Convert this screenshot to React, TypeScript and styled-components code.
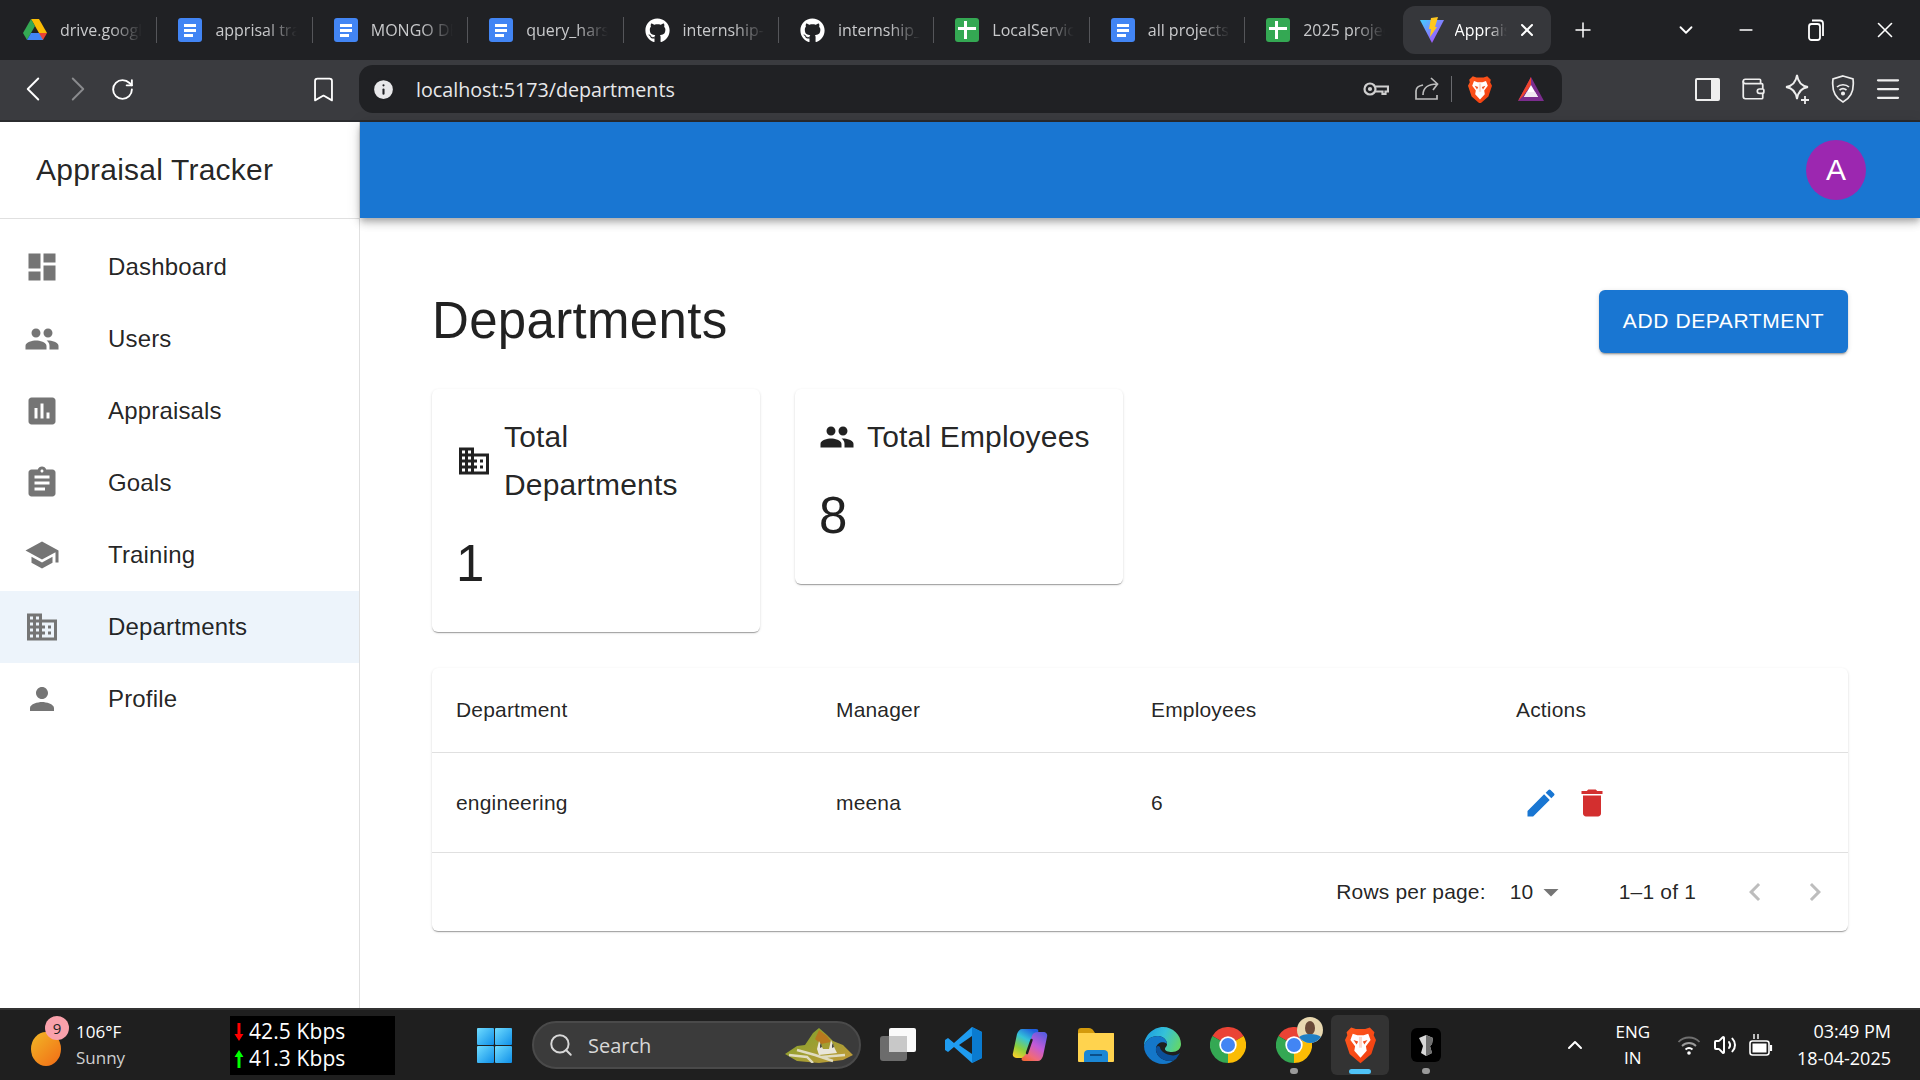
import React from 'react'
import styled, { createGlobalStyle } from 'styled-components'
import { FaGithub } from 'react-icons/fa'
import {
  MdArrowDropDown,
  MdAssessment,
  MdAssignment,
  MdBusiness,
  MdChevronLeft,
  MdChevronRight,
  MdDashboard,
  MdDelete,
  MdEdit,
  MdPeople,
  MdPerson,
  MdSchool
} from 'react-icons/md'
import {
  Bookmark,
  ChevronDown,
  ChevronLeft,
  ChevronRight,
  ChevronUp,
  Info,
  Menu,
  Minus,
  Plus,
  RotateCw,
  Search,
  Volume2,
  Wallet,
  X
} from 'lucide-react'

const GlobalStyle = createGlobalStyle`
  html, body {
    margin: 0;
    padding: 0;
    background: #fff;
    overflow: hidden;
  }

  * {
    box-sizing: border-box;
  }
`

const DocIcon = () => (
  <svg width="24" height="24" viewBox="0 0 24 24">
    <rect x="0" y="0" width="24" height="24" rx="3" fill="#4285f4" />
    <rect x="6" y="6" width="12" height="3" fill="#fff" />
    <rect x="6" y="11" width="12" height="3" fill="#fff" />
    <rect x="6" y="16" width="9" height="3" fill="#fff" />
  </svg>
)

const SheetIcon = () => (
  <svg width="24" height="24" viewBox="0 0 24 24">
    <rect x="0" y="0" width="24" height="24" rx="3" fill="#34a853" />
    <rect x="3" y="9" width="18" height="3" fill="#fff" />
    <rect x="9" y="3" width="3" height="18" fill="#fff" />
  </svg>
)

const DriveIcon = () => (
  <svg width="24" height="22" viewBox="0 0 24 22">
    <polygon points="8,0 16,0 24,14 16,14" fill="#fbbc04" />
    <polygon points="8,0 12,7 4,21 0,14" fill="#34a853" />
    <polygon points="16,14 24,14 20,21 12,21" fill="#ea4335" />
    <polygon points="8,14 16,14 20,21 4,21" fill="#4285f4" />
  </svg>
)

const ViteIcon = () => (
  <svg width="26" height="26" viewBox="0 0 26 26">
    <defs>
      <linearGradient id="vite" x1="0" y1="0" x2="1" y2="1">
        <stop offset="0" stopColor="#41d1ff" />
        <stop offset="1" stopColor="#bd34fe" />
      </linearGradient>
    </defs>
    <polygon points="1,3 25,3 13,26" fill="url(#vite)" />
    <polygon points="12,1 19,0 16,10 18,10 11,20 12,12 10,12" fill="#ffc81f" />
  </svg>
)

const BraveIcon = ({ size = 26 }: { size?: number }) => (
  <svg width={size} height={size * 1.2} viewBox="0 0 20 24">
    <defs>
      <linearGradient id="brave" x1="0" y1="0" x2="1" y2="1">
        <stop offset="0" stopColor="#ff5a1f" />
        <stop offset="1" stopColor="#f03c0e" />
      </linearGradient>
    </defs>
    <polygon points="4,1 7,2 13,2 16,1 19,4 18.500,6 20,9 17,18 10,24 3,18 0,9 1.500,6 1,4" fill="url(#brave)" />
    <polygon points="5,5 8,6 12,6 15,5 16.500,9 13.500,13 14,16 10,20.500 6,16 6.500,13 3.500,9" fill="#fff" />
    <polygon points="5.500,9 8.500,10 7.500,12" fill="#f1501f" />
    <polygon points="14.500,9 11.500,10 12.500,12" fill="#f1501f" />
    <polygon points="9,7 11,7 11,14 9,14" fill="#ffd9cc" />
  </svg>
)

const AuroraIcon = () => (
  <svg width="26" height="24" viewBox="0 0 26 24">
    <polygon points="13,0 26,24 0,24" fill="#7b2d8e" />
    <polygon points="13,0 13,8 5,19 0,24" fill="#f0452c" />
    <polygon points="13,8 20,20 6,20" fill="#fff" />
    <polygon points="9,15 17,15 20,20 6,20" fill="#f0e8f2" />
  </svg>
)

const KeyIcon = () => (
  <svg width="26" height="16" viewBox="0 0 26 16" fill="none" stroke="#cfcfcf" strokeWidth="2.2">
    <circle cx="7" cy="8" r="5.500" />
    <circle cx="7" cy="8" r="1" />
    <path d="M12.500 5.500H25V10.500H22.500V13H19.500V10.500H12.500" />
  </svg>
)

const ShareIcon = () => (
  <svg width="25" height="25" viewBox="0 0 25 25" fill="none" stroke="#bdbdbd" strokeWidth="1.700">
    <path d="M9 9C5 10 2 11 2 15V23H23V19" />
    <path d="M9 19C9 12 14 8 23 8M17 2L23.500 8L19 14" />
  </svg>
)

const VpnShieldIcon = () => (
  <svg width="24" height="28" viewBox="0 0 24 28" fill="none" stroke="#eee" strokeWidth="1.700">
    <path d="M12 1L22 4C23 12 22 22 12 27C2 22 1 12 2 4Z" />
    <path d="M6 12C9 9 15 9 18 12M8.500 15C10.500 13.500 13.500 13.500 15.500 15" />
    <circle cx="12" cy="18.500" r="1.200" fill="#eee" />
  </svg>
)

const StarPlusIcon = () => (
  <svg width="28" height="32" viewBox="0 0 28 32" fill="none" stroke="#eee" strokeWidth="1.800">
    <path d="M13 2C14 9 17 13 24 14C17 15 14 19 13 26C12 19 9 15 2 14C9 13 12 9 13 2Z" />
    <path d="M21 23V31M17 27H25" />
  </svg>
)

const RestoreIcon = () => (
  <svg width="16" height="22" viewBox="0 0 16 22" fill="none" stroke="#fff" strokeWidth="1.800">
    <rect x="1" y="5" width="11" height="16" rx="2.500" />
    <path d="M4 1.500H12C14 1.500 15 2.500 15 4.500V17" />
  </svg>
)

const WifiIcon = () => (
  <svg width="24" height="22" viewBox="0 0 24 22" fill="none" strokeWidth="1.800">
    <path d="M1.500 8C7 2 17 2 22.500 8" stroke="#6f6f6f" />
    <path d="M5 12C9 8 15 8 19 12" stroke="#9a9a9a" />
    <path d="M8.500 15.500C10.500 13.800 13.500 13.800 15.500 15.500" stroke="#fff" />
    <circle cx="12" cy="19" r="1.800" fill="#fff" />
  </svg>
)

const BatteryIcon = () => (
  <svg width="24" height="24" viewBox="0 0 24 24" fill="none" stroke="#fff" strokeWidth="1.600">
    <rect x="1" y="8" width="19" height="14" rx="2.500" />
    <rect x="3.500" y="10.500" width="14" height="9" fill="#fff" stroke="none" />
    <path d="M22 12V18" strokeWidth="2.200" />
    <path d="M5 1V6M9 1V6" strokeWidth="1.400" />
  </svg>
)

const WindowsIcon = () => (
  <svg width="35" height="35" viewBox="0 0 35 35">
    <defs>
      <linearGradient id="win" x1="0" y1="0" x2="1" y2="1">
        <stop offset="0" stopColor="#6fdcff" />
        <stop offset="1" stopColor="#0f8fe8" />
      </linearGradient>
    </defs>
    <rect x="0" y="0" width="17" height="17" rx="1" fill="url(#win)" />
    <rect x="18" y="0" width="17" height="17" rx="1" fill="url(#win)" />
    <rect x="0" y="18" width="17" height="17" rx="1" fill="url(#win)" />
    <rect x="18" y="18" width="17" height="17" rx="1" fill="url(#win)" />
  </svg>
)

const TaskViewIcon = () => (
  <svg width="36" height="34" viewBox="0 0 36 34">
    <rect x="0" y="8" width="27" height="25" rx="3" fill="#6c6c6c" />
    <rect x="9" y="0" width="27" height="24" rx="2" fill="#fafafa" />
    <rect x="9" y="8" width="18" height="16" fill="#c8c8c8" />
  </svg>
)

const VsCodeIcon = () => (
  <svg width="38" height="38" viewBox="0 0 38 38">
    <polygon points="27,1 37,6 37,32 27,37 9,21 3,26 0,24 0,14 3,12 9,17" fill="#1f9cf0" />
    <polygon points="27,10 27,28 14,19" fill="#1f1f1f" />
    <polygon points="27,1 37,6 37,32 27,37 27,28 27,10" fill="#0a7bd0" />
  </svg>
)

const CopilotIcon = () => (
  <svg width="36" height="34" viewBox="0 0 36 34">
    <defs>
      <linearGradient id="cop1" x1="0.700" y1="0" x2="0.200" y2="1">
        <stop offset="0" stopColor="#1f5fe0" />
        <stop offset="0.350" stopColor="#34c3d8" />
        <stop offset="0.700" stopColor="#8ccf3c" />
        <stop offset="1" stopColor="#f4cf2c" />
      </linearGradient>
      <linearGradient id="cop2" x1="0.800" y1="0" x2="0.200" y2="1">
        <stop offset="0" stopColor="#5a5de0" />
        <stop offset="0.450" stopColor="#c35ad8" />
        <stop offset="0.800" stopColor="#f06a7a" />
        <stop offset="1" stopColor="#f2683c" />
      </linearGradient>
    </defs>
    <path d="M10 1h14c3 0 3 3 1 4-3 2-4 5-5 8l-4 13c-1 3-3 4-6 4H5c-3 0-5-2-4-5L5 6c1-3 3-5 5-5z" fill="url(#cop1)" />
    <path d="M26 33H12c-3 0-3-3-1-4 3-2 4-5 5-8l4-13c1-3 3-4 6-4h5c3 0 5 2 4 5l-4 19c-1 3-3 5-5 5z" fill="url(#cop2)" />
    <path d="M19.500 12L15 25" stroke="#1f1f1f" strokeWidth="2.400" strokeLinecap="round" />
  </svg>
)

const FolderIcon = () => (
  <svg width="36" height="34" viewBox="0 0 36 34">
    <path d="M0 3c0-2 1-3 3-3h8c2 0 3 1 4 2l2 3h19v8H0z" fill="#d39a0c" />
    <rect x="0" y="5" width="36" height="29" rx="1" fill="#ffd34e" />
    <path d="M6 34V26c0-3 2-4 4-4h16c2 0 4 1 4 4v8z" fill="#1b87d5" />
    <rect x="12" y="26" width="12" height="2" fill="#0b4f8a" />
  </svg>
)

const EdgeIcon = () => (
  <svg width="37" height="37" viewBox="0 0 37 37">
    <defs>
      <linearGradient id="edge1" x1="0" y1="0.300" x2="1" y2="0.600">
        <stop offset="0" stopColor="#1b9de2" />
        <stop offset="0.500" stopColor="#35c1d8" />
        <stop offset="1" stopColor="#62d66c" />
      </linearGradient>
    </defs>
    <path d="M19 0C29 0 37 8 37 17c0 5-4 8-9 8-4 0-7-1-7-3 0-2 2-2 2-5 0-4-4-8-9-8C7 9 2 13 0 19 0 9 9 0 19 0z" fill="url(#edge1)" />
    <path d="M0 19C2 13 7 9 14 9c5 0 9 4 9 8-3-3-10-2-11 4-1 6 5 13 14 13 2 0 4-1 6-2-4 3-8 5-13 5C9 37 0 29 0 19z" fill="#1477c9" />
    <path d="M12 21c-1 6 5 13 14 13 2 0 4-1 6-2l4-6c-3 2-6 3-10 2-6-1-10-5-10-8-2-2-3-1-4 1z" fill="#0b4f99" />
  </svg>
)

const ChromeIcon = () => (
  <svg width="36" height="36" viewBox="0 0 36 36">
    <path d="M18 18L2.400 9A18 18 0 0 1 33.600 9Z" fill="#ea4335" />
    <path d="M18 18L2.400 9A18 18 0 0 0 18 36Z" fill="#34a853" />
    <path d="M18 18L33.600 9A18 18 0 0 1 18 36Z" fill="#fbbc04" />
    <circle cx="18" cy="18" r="8.700" fill="#fff" />
    <circle cx="18" cy="18" r="7" fill="#4285f4" />
  </svg>
)

const ProfilePic = () => (
  <svg width="26" height="26" viewBox="0 0 26 26">
    <circle cx="13" cy="13" r="13" fill="#e8d8b0" />
    <ellipse cx="13" cy="11" rx="5" ry="7" fill="#6a4a38" />
    <path d="M2 20c4-4 18-4 22 0-3 4-7 6-11 6s-8-2-11-6z" fill="#1f7fc4" />
  </svg>
)

const MountainIcon = () => (
  <svg width="72" height="36" viewBox="0 0 72 36">
    <defs>
      <linearGradient id="hill" x1="0" y1="0" x2="1" y2="1">
        <stop offset="0" stopColor="#7ca32a" />
        <stop offset="1" stopColor="#c49a3a" />
      </linearGradient>
    </defs>
    <polygon points="2,27 14,19 22,18 30,6 36,1 44,8 50,14 60,18 70,28 60,33 36,36 14,34" fill="url(#hill)" />
    <polygon points="36,3 44,9 48,15 38,17 32,12" fill="#b8791f" />
    <polygon points="34,22 36,14 40,22 46,22 48,13 52,22 54,26 36,28" fill="#e9e6da" />
    <polygon points="37,18 38,16 39,20 37,21" fill="#4a4a40" />
    <polygon points="49,18 50,16 51,20 49,21" fill="#4a4a40" />
    <path d="M6 28L24 30L30 36M14 23L32 28L50 34M38 30L62 28" fill="none" stroke="#e0dcc0" strokeWidth="2.400" />
  </svg>
)

const BlackAppIcon = () => (
  <svg width="30" height="34" viewBox="0 0 30 34">
    <rect x="0" y="0" width="30" height="34" rx="6" fill="#000" />
    <polygon points="8,10 15,7 22,10 21,16 19,18 21,25 15,28 10,25 12,18" fill="#d8d8d8" />
    <polygon points="15,7 22,10 21,16 19,18 21,25 15,28" fill="#6f6f6f" />
  </svg>
)

const NetArrow = ({ color, down }: { color: string; down?: boolean }) => (
  <svg width="10" height="20" viewBox="0 0 10 20">
    <polygon
      points={down ? '3.500,1 6.500,1 6.500,12 9.500,12 5,19 0.500,12 3.500,12' : '3.500,19 6.500,19 6.500,8 9.500,8 5,1 0.500,8 3.500,8'}
      fill={color}
    />
  </svg>
)

const Chrome = styled.header`
  background: #202124;
  color: #fff;
  font-family: 'Open Sans', 'Noto Sans', sans-serif;
`

const TabStrip = styled.div`
  display: flex;
  align-items: center;
  height: 60px;
  padding-left: 2px;
`

const Tab = styled.div<{ $last?: boolean }>`
  display: flex;
  align-items: center;
  gap: 13px;
  width: 155.4px;
  height: 48px;
  padding-left: 21px;
  border-right: 1px solid;
  border-image: ${p =>
    p.$last
      ? 'linear-gradient(transparent, transparent) 1'
      : 'linear-gradient(transparent 12px, #55565a 12px, #55565a 36px, transparent 36px) 1'};
`

const TabLabel = styled.span`
  width: 82px;
  overflow: hidden;
  white-space: nowrap;
  font-size: 16px;
  color: #c9cacc;
  mask-image: linear-gradient(to right, #000 62%, transparent 100%);
`

const ActiveTab = styled.div`
  display: flex;
  align-items: center;
  gap: 10px;
  width: 148px;
  height: 48px;
  margin-left: 2px;
  padding: 0 12px 0 16px;
  background: #36373b;
  border-radius: 12px;
`

const ActiveLabel = styled(TabLabel)`
  width: 52px;
  color: #fff;
`

const NewTab = styled.div`
  display: flex;
  margin-left: 20px;
`

const WindowControls = styled.div`
  display: flex;
  align-items: center;
  margin-left: auto;
`

const WindowSlot = styled.span<{ $narrow?: boolean }>`
  display: flex;
  justify-content: center;
  width: ${p => (p.$narrow ? 51 : 69.5)}px;
`

const Toolbar = styled.div`
  display: flex;
  align-items: center;
  height: 62px;
  padding-bottom: 2px;
  background: #3a3b3f;
  border-bottom: 2px solid #2b2c2f;
`

const NavButtons = styled.div`
  display: flex;
  align-items: center;
  width: 359px;
  padding-left: 11px;
`

const NavSlot = styled.span`
  display: flex;
  justify-content: center;
  width: 44.5px;
`

const BookmarkSlot = styled.span`
  display: flex;
  justify-content: center;
  width: 44px;
  margin-left: 157px;
`

const AddressBar = styled.div`
  display: flex;
  align-items: center;
  width: 1203px;
  height: 48px;
  padding: 0 8px 0 12px;
  border-radius: 14px;
  background: #202124;
`

const Url = styled.span`
  margin-left: 20px;
  font-size: 19.7px;
  color: #e8e8ea;
`

const AddressTools = styled.div`
  display: flex;
  align-items: center;
  margin-left: auto;
`

const AddressSlot = styled.span<{ $width: number }>`
  display: flex;
  justify-content: center;
  width: ${p => p.$width}px;
`

const ToolDivider = styled.span`
  width: 1px;
  height: 26px;
  background: #6a6b6f;
`

const BrowserTools = styled.div`
  display: flex;
  align-items: center;
  margin-left: auto;
  padding-right: 10px;
`

const BrowserSlot = styled.span`
  display: flex;
  justify-content: center;
  width: 45px;
`

const SolidPanel = styled.span`
  display: block;
  width: 25px;
  height: 23px;
  border: 2px solid #eee;
  border-right-width: 9px;
  border-radius: 2px;
`

const Page = styled.div`
  display: flex;
  height: 886px;
  font-family: 'Liberation Sans', Arial, sans-serif;
  letter-spacing: 0.17px;
  color: rgba(0, 0, 0, 0.87);
  background: #fff;
`

const Sidebar = styled.aside`
  flex: 0 0 360px;
  border-right: 1px solid #e0e0e0;
`

const Brand = styled.div`
  display: flex;
  align-items: center;
  height: 97px;
  padding-left: 36px;
  font-size: 30px;
  font-weight: 400;
  letter-spacing: 0.22px;
  border-bottom: 1px solid #e0e0e0;
`

const NavList = styled.nav`
  padding-top: 12px;
`

const NavItem = styled.div<{ $active?: boolean }>`
  display: flex;
  align-items: center;
  height: 72px;
  padding-left: 24px;
  font-size: 24px;
  background: ${p => (p.$active ? '#edf4fb' : 'transparent')};
`

const NavIcon = styled.span`
  display: flex;
  width: 84px;
  color: #757575;
`

const Content = styled.div`
  flex: 1;
  display: flex;
  flex-direction: column;
  min-width: 0;
`

const AppBar = styled.div`
  display: flex;
  align-items: center;
  justify-content: flex-end;
  height: 96px;
  padding-right: 54px;
  background: #1976d2;
  box-shadow: 0 3px 6px -1px rgba(0, 0, 0, 0.2), 0 6px 8px 0 rgba(0, 0, 0, 0.14), 0 1px 14px 0 rgba(0, 0, 0, 0.12);
`

const Avatar = styled.div`
  display: flex;
  align-items: center;
  justify-content: center;
  width: 60px;
  height: 60px;
  border-radius: 50%;
  background: #9c27b0;
  color: #fff;
  font-size: 30px;
`

const Main = styled.main`
  padding: 72px;
`

const HeadingRow = styled.div`
  display: flex;
  align-items: center;
  justify-content: space-between;
  margin-bottom: 36px;
`

const Heading = styled.h1`
  margin: 0;
  padding-bottom: 2px;
  font-size: 51px;
  font-weight: 400;
  line-height: 61px;
  letter-spacing: 0.33px;
`

const PrimaryButton = styled.button`
  width: 249px;
  height: 63px;
  padding: 0 0 2px;
  border: none;
  border-radius: 6px;
  background: #1976d2;
  color: #fff;
  font-family: inherit;
  font-size: 21px;
  font-weight: 400;
  letter-spacing: 0.6px;
  text-transform: uppercase;
  box-shadow: 0 3px 1px -2px rgba(0, 0, 0, 0.2), 0 2px 2px 0 rgba(0, 0, 0, 0.14), 0 1px 5px 0 rgba(0, 0, 0, 0.12);
`

const Cards = styled.div`
  display: flex;
  align-items: flex-start;
  gap: 35.5px;
  margin-bottom: 36px;
`

const Card = styled.section`
  width: 327.5px;
  padding: 24px 24px 36px;
  border-radius: 6px;
  background: #fff;
  box-shadow: 0 2px 1px -1px rgba(0, 0, 0, 0.2), 0 1px 1px 0 rgba(0, 0, 0, 0.14), 0 1px 3px 0 rgba(0, 0, 0, 0.12);
`

const CardTitle = styled.div`
  display: flex;
  align-items: center;
  gap: 12px;
  font-size: 30px;
  line-height: 48px;
  margin-bottom: 24px;
`

const CardIcon = styled.span`
  display: flex;
  flex: 0 0 36px;
`

const CardValue = styled.div`
  padding-bottom: 2px;
  font-size: 51px;
  line-height: 61px;
`

const TablePaper = styled.section`
  border-radius: 6px;
  background: #fff;
  box-shadow: 0 2px 1px -1px rgba(0, 0, 0, 0.2), 0 1px 1px 0 rgba(0, 0, 0, 0.14), 0 1px 3px 0 rgba(0, 0, 0, 0.12);
  font-size: 21px;
`

const TableRow = styled.div<{ $height: number }>`
  display: grid;
  grid-template-columns: 380px 315px 365px 1fr;
  align-items: center;
  height: ${p => p.$height}px;
  padding-left: 24px;
  border-bottom: 1px solid #e0e0e0;
  font-weight: 400;
`

const Actions = styled.div`
  display: flex;
  align-items: center;
  gap: 15px;
  padding-left: 7px;
`

const IconBtn = styled.span<{ $color: string }>`
  display: flex;
  color: ${p => p.$color};
`

const Pagination = styled.div`
  display: flex;
  align-items: center;
  justify-content: flex-end;
  height: 78px;
  padding-right: 15px;
`

const RowsSelect = styled.div`
  display: flex;
  align-items: center;
  margin-left: 24px;
  width: 85px;
`

const PageInfo = styled.span`
  margin-left: 24px;
  margin-right: 41px;
`

const PageArrows = styled.div`
  display: flex;
  gap: 24px;
  color: #bdbdbd;
`

const Taskbar = styled.footer`
  display: flex;
  align-items: center;
  height: 72px;
  background: #1f1f1f;
  border-top: 2px solid #333;
  color: #fff;
  font-family: 'Open Sans', 'Noto Sans', sans-serif;
`

const Weather = styled.div`
  display: flex;
  align-items: center;
  width: 230px;
  padding-left: 31px;
`

const Sun = styled.div`
  position: relative;
  width: 30px;
  height: 34px;
  margin: 8px 15px 0 0;
  border-radius: 50%;
  background: linear-gradient(135deg, #f2b826, #f26b16);
`

const WeatherBadge = styled.span`
  position: absolute;
  top: -16px;
  right: -8px;
  display: flex;
  align-items: center;
  justify-content: center;
  width: 24px;
  height: 24px;
  border-radius: 50%;
  background: #f9a1ab;
  color: #222;
  font-size: 15px;
`

const WeatherText = styled.div`
  font-size: 17px;
  line-height: 26px;

  span {
    display: block;
    color: #cfcfcf;
  }
`

const NetMeter = styled.div`
  display: flex;
  flex-direction: column;
  justify-content: center;
  width: 165px;
  height: 59px;
  padding-left: 4px;
  background: #000;
  font-size: 21px;
  line-height: 27px;
  letter-spacing: 0.1px;
  white-space: nowrap;
`

const NetLine = styled.div`
  display: flex;
  align-items: center;
  gap: 5px;
`

const TaskSlot = styled.div<{ $active?: boolean; $dot?: boolean }>`
  position: relative;
  display: flex;
  align-items: center;
  justify-content: center;
  width: ${p => (p.$active ? 58 : 66)}px;
  margin: ${p => (p.$active ? '0 4px' : '0')};
  height: 60px;
  border-radius: 6px;
  background: ${p => (p.$active ? '#333' : 'transparent')};

  &::after {
    content: '';
    position: absolute;
    bottom: 1px;
    left: 50%;
    display: ${p => (p.$active || p.$dot ? 'block' : 'none')};
    width: ${p => (p.$active ? 22 : 8)}px;
    height: ${p => (p.$active ? 5 : 6)}px;
    border-radius: 3px;
    transform: translateX(-50%);
    background: ${p => (p.$active ? '#4fc3f7' : '#9a9a9a')};
  }
`

const StartSlot = styled(TaskSlot)`
  margin-left: 66px;
`

const ProfileBadge = styled.span`
  position: absolute;
  top: 2px;
  left: 36px;
  display: flex;
`

const SearchPill = styled.div`
  display: flex;
  align-items: center;
  gap: 14px;
  width: 329px;
  height: 48px;
  margin: 0 4px 0 5px;
  padding: 0 4px 0 14px;
  border-radius: 24px;
  border: 2px solid #4a4a4a;
  background: #3b3b3b;
  font-size: 20px;
  color: #d8d8d8;
`

const SearchArt = styled.span`
  display: flex;
  margin-left: auto;
`

const Tray = styled.div`
  display: flex;
  align-items: center;
  margin-left: auto;
  padding-right: 29px;
`

const TrayLang = styled.div`
  margin: 0 27px 0 28px;
  font-size: 17px;
  line-height: 26px;
  text-align: center;
`

const TrayIcons = styled.div`
  display: flex;
  align-items: center;
  gap: 12px;
`

const Clock = styled.div`
  margin-left: 24px;
  font-size: 18px;
  line-height: 27px;
  text-align: right;
`

const NAV_ITEMS = [
  { label: 'Dashboard', icon: <MdDashboard size={36} /> },
  { label: 'Users', icon: <MdPeople size={36} /> },
  { label: 'Appraisals', icon: <MdAssessment size={36} /> },
  { label: 'Goals', icon: <MdAssignment size={36} /> },
  { label: 'Training', icon: <MdSchool size={36} /> },
  { label: 'Departments', icon: <MdBusiness size={36} />, active: true },
  { label: 'Profile', icon: <MdPerson size={36} /> }
]

const TABS = [
  { label: 'drive.google', icon: <DriveIcon /> },
  { label: 'apprisal track', icon: <DocIcon /> },
  { label: 'MONGO DB', icon: <DocIcon /> },
  { label: 'query_hars', icon: <DocIcon /> },
  { label: 'internship-', icon: <FaGithub size={25} color="#fff" /> },
  { label: 'internship_', icon: <FaGithub size={25} color="#fff" /> },
  { label: 'LocalService', icon: <SheetIcon /> },
  { label: 'all projects', icon: <DocIcon /> },
  { label: '2025 projects', icon: <SheetIcon /> }
]

const App = () => {
  return (
    <>
      <GlobalStyle />
      <Chrome>
        <TabStrip>
          {TABS.map((t, i) => (
            <Tab key={t.label} $last={i === TABS.length - 1}>
              {t.icon}
              <TabLabel>{t.label}</TabLabel>
            </Tab>
          ))}
          <ActiveTab>
            <ViteIcon />
            <ActiveLabel>Appraisal</ActiveLabel>
            <X size={20} strokeWidth={2.4} />
          </ActiveTab>
          <NewTab>
            <Plus size={24} strokeWidth={1.5} />
          </NewTab>
          <WindowControls>
            <WindowSlot $narrow>
              <ChevronDown size={22} />
            </WindowSlot>
            <WindowSlot>
              <Minus size={20} />
            </WindowSlot>
            <WindowSlot>
              <RestoreIcon />
            </WindowSlot>
            <WindowSlot>
              <X size={26} strokeWidth={1.5} />
            </WindowSlot>
          </WindowControls>
        </TabStrip>
        <Toolbar>
          <NavButtons>
            <NavSlot>
              <ChevronLeft size={42} strokeWidth={1.1} />
            </NavSlot>
            <NavSlot>
              <ChevronRight size={42} strokeWidth={1.1} color="#8a8b8e" />
            </NavSlot>
            <NavSlot>
              <RotateCw size={25} strokeWidth={1.8} />
            </NavSlot>
            <BookmarkSlot>
              <Bookmark size={29} strokeWidth={1.5} />
            </BookmarkSlot>
          </NavButtons>
          <AddressBar>
            <Info size={25} fill="#e8e8ea" color="#202124" />
            <Url>localhost:5173/departments</Url>
            <AddressTools>
              <AddressSlot $width={50}>
                <KeyIcon />
              </AddressSlot>
              <AddressSlot $width={50}>
                <ShareIcon />
              </AddressSlot>
              <ToolDivider />
              <AddressSlot $width={56}>
                <BraveIcon size={24} />
              </AddressSlot>
              <AddressSlot $width={46}>
                <AuroraIcon />
              </AddressSlot>
            </AddressTools>
          </AddressBar>
          <BrowserTools>
            <BrowserSlot>
              <SolidPanel />
            </BrowserSlot>
            <BrowserSlot>
              <Wallet size={26} color="#eee" strokeWidth={1.6} />
            </BrowserSlot>
            <BrowserSlot>
              <StarPlusIcon />
            </BrowserSlot>
            <BrowserSlot>
              <VpnShieldIcon />
            </BrowserSlot>
            <BrowserSlot>
              <Menu size={30} color="#eee" strokeWidth={1.8} />
            </BrowserSlot>
          </BrowserTools>
        </Toolbar>
      </Chrome>

      <Page>
        <Sidebar>
          <Brand>Appraisal Tracker</Brand>
          <NavList>
            {NAV_ITEMS.map(item => (
              <NavItem key={item.label} $active={item.active}>
                <NavIcon>{item.icon}</NavIcon>
                {item.label}
              </NavItem>
            ))}
          </NavList>
        </Sidebar>
        <Content>
          <AppBar>
            <Avatar>A</Avatar>
          </AppBar>
          <Main>
            <HeadingRow>
              <Heading>Departments</Heading>
              <PrimaryButton>Add Department</PrimaryButton>
            </HeadingRow>
            <Cards>
              <Card>
                <CardTitle>
                  <CardIcon>
                    <MdBusiness size={36} />
                  </CardIcon>
                  <span>Total Departments</span>
                </CardTitle>
                <CardValue>1</CardValue>
              </Card>
              <Card>
                <CardTitle>
                  <CardIcon>
                    <MdPeople size={36} />
                  </CardIcon>
                  <span>Total Employees</span>
                </CardTitle>
                <CardValue>8</CardValue>
              </Card>
            </Cards>
            <TablePaper>
              <TableRow $height={85}>
                <span>Department</span>
                <span>Manager</span>
                <span>Employees</span>
                <span>Actions</span>
              </TableRow>
              <TableRow $height={100}>
                <span>engineering</span>
                <span>meena</span>
                <span>6</span>
                <Actions>
                  <IconBtn $color="#1976d2">
                    <MdEdit size={36} />
                  </IconBtn>
                  <IconBtn $color="#d32f2f">
                    <MdDelete size={36} />
                  </IconBtn>
                </Actions>
              </TableRow>
              <Pagination>
                <span>Rows per page:</span>
                <RowsSelect>
                  10
                  <MdArrowDropDown size={36} color="#757575" />
                </RowsSelect>
                <PageInfo>1–1 of 1</PageInfo>
                <PageArrows>
                  <MdChevronLeft size={36} />
                  <MdChevronRight size={36} />
                </PageArrows>
              </Pagination>
            </TablePaper>
          </Main>
        </Content>
      </Page>

      <Taskbar>
        <Weather>
          <Sun>
            <WeatherBadge>9</WeatherBadge>
          </Sun>
          <WeatherText>
            106°F
            <span>Sunny</span>
          </WeatherText>
        </Weather>
        <NetMeter>
          <NetLine>
            <NetArrow color="#f00" down />
            42.5 Kbps
          </NetLine>
          <NetLine>
            <NetArrow color="#0f0" />
            41.3 Kbps
          </NetLine>
        </NetMeter>
        <StartSlot>
          <WindowsIcon />
        </StartSlot>
        <SearchPill>
          <Search size={26} strokeWidth={1.8} />
          Search
          <SearchArt>
            <MountainIcon />
          </SearchArt>
        </SearchPill>
        <TaskSlot>
          <TaskViewIcon />
        </TaskSlot>
        <TaskSlot>
          <VsCodeIcon />
        </TaskSlot>
        <TaskSlot>
          <CopilotIcon />
        </TaskSlot>
        <TaskSlot>
          <FolderIcon />
        </TaskSlot>
        <TaskSlot>
          <EdgeIcon />
        </TaskSlot>
        <TaskSlot>
          <ChromeIcon />
        </TaskSlot>
        <TaskSlot $dot>
          <ChromeIcon />
          <ProfileBadge>
            <ProfilePic />
          </ProfileBadge>
        </TaskSlot>
        <TaskSlot $active>
          <BraveIcon size={31} />
        </TaskSlot>
        <TaskSlot $dot>
          <BlackAppIcon />
        </TaskSlot>
        <Tray>
          <ChevronUp size={24} />
          <TrayLang>
            ENG
            <br />
            IN
          </TrayLang>
          <TrayIcons>
            <WifiIcon />
            <Volume2 size={24} />
            <BatteryIcon />
          </TrayIcons>
          <Clock>
            03:49 PM
            <br />
            18-04-2025
          </Clock>
        </Tray>
      </Taskbar>
    </>
  )
}

export default App
